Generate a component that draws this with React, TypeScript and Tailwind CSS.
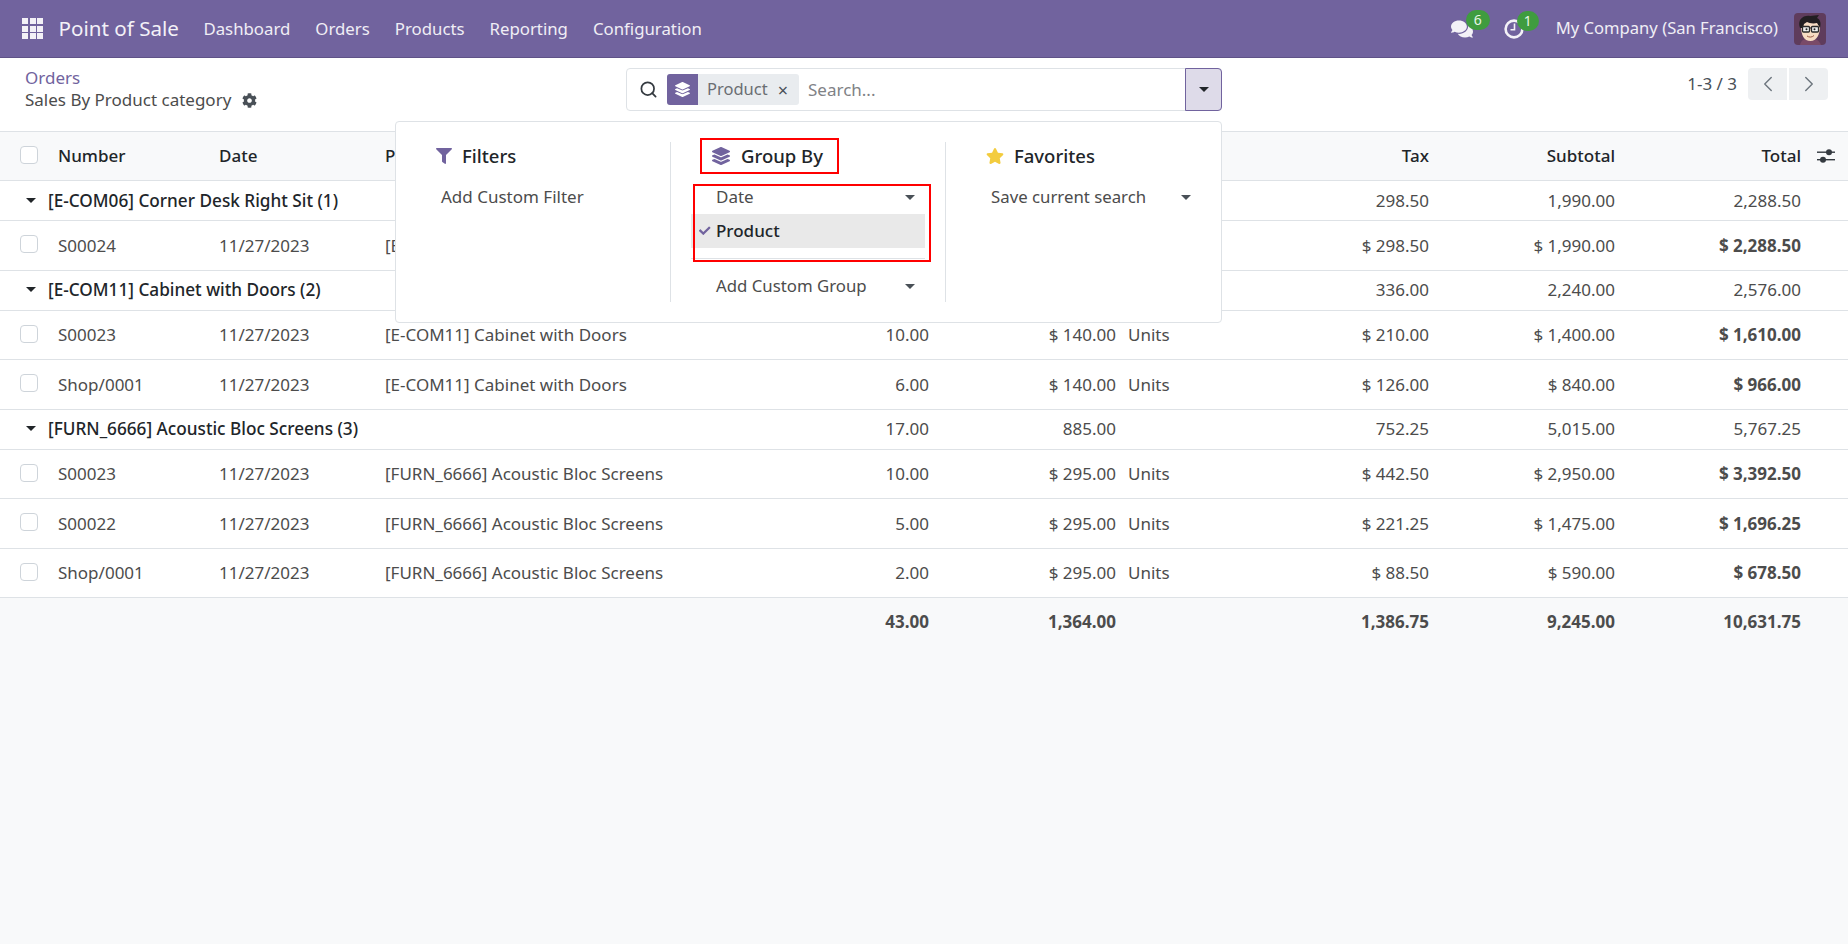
import { ChevronLeft, ChevronRight, Search } from "lucide-react";
import { FaCheck, FaCog, FaComments, FaFilter, FaLayerGroup, FaStar } from "react-icons/fa";

const navItems = ["Dashboard", "Orders", "Products", "Reporting", "Configuration"];

type Line = { num: string; product: string; qty: string; price: string; unit: string; tax: string; sub: string; total: string };
type Group = { name: string; qty: string; price: string; tax: string; sub: string; total: string; lines: Line[] };

// qty / price cells of the first rows sit under the open search panel, so they stay empty
const groups: Group[] = [
	{
		name: "[E-COM06] Corner Desk Right Sit (1)",
		qty: "",
		price: "",
		tax: "298.50",
		sub: "1,990.00",
		total: "2,288.50",
		lines: [
			{ num: "S00024", product: "[E-COM06] Corner Desk Right Sit", qty: "", price: "", unit: "", tax: "$ 298.50", sub: "$ 1,990.00", total: "$ 2,288.50" },
		],
	},
	{
		name: "[E-COM11] Cabinet with Doors (2)",
		qty: "",
		price: "",
		tax: "336.00",
		sub: "2,240.00",
		total: "2,576.00",
		lines: [
			{ num: "S00023", product: "[E-COM11] Cabinet with Doors", qty: "10.00", price: "$ 140.00", unit: "Units", tax: "$ 210.00", sub: "$ 1,400.00", total: "$ 1,610.00" },
			{ num: "Shop/0001", product: "[E-COM11] Cabinet with Doors", qty: "6.00", price: "$ 140.00", unit: "Units", tax: "$ 126.00", sub: "$ 840.00", total: "$ 966.00" },
		],
	},
	{
		name: "[FURN_6666] Acoustic Bloc Screens (3)",
		qty: "17.00",
		price: "885.00",
		tax: "752.25",
		sub: "5,015.00",
		total: "5,767.25",
		lines: [
			{ num: "S00023", product: "[FURN_6666] Acoustic Bloc Screens", qty: "10.00", price: "$ 295.00", unit: "Units", tax: "$ 442.50", sub: "$ 2,950.00", total: "$ 3,392.50" },
			{ num: "S00022", product: "[FURN_6666] Acoustic Bloc Screens", qty: "5.00", price: "$ 295.00", unit: "Units", tax: "$ 221.25", sub: "$ 1,475.00", total: "$ 1,696.25" },
			{ num: "Shop/0001", product: "[FURN_6666] Acoustic Bloc Screens", qty: "2.00", price: "$ 295.00", unit: "Units", tax: "$ 88.50", sub: "$ 590.00", total: "$ 678.50" },
		],
	},
];

function Caret({ dark }: { dark?: boolean }) {
	return (
		<span
			className={`inline-block h-0 w-0 border-x-[5px] border-t-[5px] border-x-transparent ${dark ? "border-t-[#212529]" : "border-t-[#495057]"}`}
		/>
	);
}

function Checkbox() {
	return <span className="mb-[2px] block h-[18px] w-[18px] rounded-[4px] border border-[#ced4da] bg-white" />;
}

function Avatar() {
	return (
		<svg viewBox="0 0 32 32" className="h-8 w-8 rounded-[4px]">
			<rect width="32" height="32" fill="#5f3c5c" />
			<path d="M6 32c1-5 5-7 10-7s9 2 11 7z" fill="#7a4a68" />
			<path d="M7 13c0 9 3 15 9.5 15S26 21 26 13l-2-4H10z" fill="#f7dcc3" />
			<path d="M6 15C3 7 9 2 16 3l9-1-2 3c4 2 4 6 3 10l-3-5c-4 1-8 0-10-1l-3 2-1 4z" fill="#221f22" />
			<rect x="8.5" y="13.5" width="7" height="5.5" rx="1" fill="#eef0ee" stroke="#2a2a2a" strokeWidth="1.3" />
			<rect x="17.5" y="13.5" width="7" height="5.5" rx="1" fill="#eef0ee" stroke="#2a2a2a" strokeWidth="1.3" />
			<path d="M15.5 15h2" stroke="#2a2a2a" strokeWidth="1" />
			<circle cx="12.5" cy="16.2" r="1" fill="#222" />
			<circle cx="20.5" cy="16.2" r="1" fill="#222" />
			<path d="M13 23c2 1.5 5 1.5 7-.5" stroke="#9a5b45" strokeWidth="1" fill="none" />
		</svg>
	);
}

function ClockIcon() {
	return (
		<svg viewBox="0 0 20 20" className="h-[20px] w-[20px]" fill="none" stroke="currentColor">
			<circle cx="10" cy="10" r="8.4" strokeWidth="2.6" />
			<path d="M10.5 4.5v6.3H6.5" strokeWidth="1.6" />
		</svg>
	);
}

function Navbar() {
	return (
		<nav className="flex h-[58px] items-center border-b border-[#5f5287] bg-[#71639e] text-[16.8px] text-white">
			<div className="ml-[22px] grid h-[21px] w-[21px] grid-cols-3 gap-[1.5px]">
				{Array.from({ length: 9 }).map((_, i) => (
					<span key={i} className="bg-[#f3f1f7]" />
				))}
			</div>
			<span className="ml-[15.5px] text-[20.6px] text-[#f3f1f7]">Point of Sale</span>
			<div className="ml-[24.5px] flex gap-[25px] text-[#f0eef5]">
				{navItems.map((item) => (
					<span key={item}>{item}</span>
				))}
			</div>
			<div className="ml-auto flex items-center">
				<span className="relative mr-[31px] text-[22px] text-[#f3f1f7]">
					<FaComments />
					<span className="absolute -top-[8px] left-[15px] flex h-[20px] w-[24px] items-center justify-center rounded-full bg-[#3f9c3f] text-[14px] leading-none text-[#e8f5e8]">
						6
					</span>
				</span>
				<span className="relative mr-[32px] text-[#f3f1f7]">
					<ClockIcon />
					<span className="absolute -top-[8px] left-[13px] flex h-[20px] w-[22px] items-center justify-center rounded-full bg-[#3f9c3f] text-[14px] leading-none text-[#e8f5e8]">
						1
					</span>
				</span>
				<span className="mr-[16px] text-[16.6px] text-[#f0eef5]">My Company (San Francisco)</span>
				<span className="mr-[22px]">
					<Avatar />
				</span>
			</div>
		</nav>
	);
}

function SearchPanel() {
	return (
		<div className="absolute top-[63px] left-[395px] z-10 flex h-[202px] w-[827px] rounded-[4px] border border-[#dee2e6] bg-white py-[20px] text-[#4c4c4c]">
			<div className="w-[275px] border-r border-[#dee2e6]">
				<div className="-mt-[4px] flex h-[36px] items-center pl-[40px] text-[18.5px] font-medium text-[#212529]">
					<FaFilter className="mr-[10px] text-[16px] text-[#71639e]" />
					Filters
				</div>
				<div className="mt-[6px] flex h-[34px] items-center pl-[45px]">Add Custom Filter</div>
			</div>
			<div className="relative w-[275px] border-r border-[#dee2e6]">
				<div className="-mt-[4px] ml-[29px] flex h-[36px] w-[139px] items-center border-2 border-[#f00] pl-[10px] text-[18.5px] font-medium text-[#212529]">
					<FaLayerGroup className="mr-[11px] text-[18px] text-[#71639e]" />
					Group By
				</div>
				<div className="mt-[6px] flex h-[34px] items-center justify-between pr-[30px] pl-[45px]">
					Date
					<Caret />
				</div>
				<div className="ml-[20px] flex h-[34px] w-[234px] items-center bg-[#e9e9e9] pl-[25px] font-medium text-[#212529]">
					<FaCheck className="absolute left-[28px] text-[11.5px] text-[#71639e]" />
					Product
				</div>
				<div className="mt-[10px] ml-[20px] w-[234px] border-t border-[#dee2e6]" />
				<div className="mt-[10px] flex h-[34px] items-center justify-between pr-[30px] pl-[45px] text-[16.8px]">
					Add Custom Group
					<Caret />
				</div>
				<div className="absolute top-[42px] left-[22px] h-[78px] w-[238px] border-2 border-[#f00]" />
			</div>
			<div className="flex-1">
				<div className="-mt-[4px] flex h-[36px] items-center pl-[40px] text-[18.5px] font-medium text-[#212529]">
					<FaStar className="mr-[10px] text-[18px] text-[#f3cc3e]" />
					Favorites
				</div>
				<div className="mt-[6px] flex h-[34px] items-center justify-between pr-[30px] pl-[45px] text-[16.8px]">
					Save current search
					<Caret />
				</div>
			</div>
		</div>
	);
}

function ControlPanel() {
	return (
		<div className="relative flex h-[73px] bg-white">
			<div className="absolute top-[9px] left-[25px] leading-[22px]">
				<div className="text-[#71639e]">Orders</div>
				<div className="flex items-center text-[#4c4c4c]">
					Sales By Product category
					<FaCog className="ml-[11px] text-[15px] text-[#495057]" />
				</div>
			</div>
			<div className="absolute top-[10px] left-[626px] flex h-[43px] w-[596px] items-center rounded-[4px] border border-[#dee2e6] bg-white">
				<Search className="ml-[12px] h-[19px] w-[19px] text-[#343a40]" strokeWidth={2.2} />
				<div className="ml-[9px] flex h-[31px] w-[132px] items-center rounded-[3px] bg-[#e9ecef] text-[#6b6e73]">
					<span className="flex h-full w-[31px] items-center justify-center rounded-l-[3px] bg-[#71639e]">
						<FaLayerGroup className="text-[15px] text-white" />
					</span>
					<span className="ml-[9px] text-[16.5px]">Product</span>
					<span className="ml-[10px] text-[18px] leading-none text-[#495057]">×</span>
				</div>
				<span className="ml-[9px] text-[#7f8286]">Search...</span>
				<span className="-my-px -mr-px ml-auto flex h-[43px] w-[37px] items-center justify-center rounded-r-[4px] border border-[#71639e] bg-[#dedbe9]">
					<Caret dark />
				</span>
			</div>
			<div className="mt-[10px] ml-auto flex h-[32px] items-center pr-[20px]">
				<span className="mr-[11px] text-[#495057]">1-3 / 3</span>
				<span className="flex h-[32px] w-[39px] items-center justify-center rounded-l-[4px] bg-[#eef0f2] text-[#6c757d]">
					<ChevronLeft className="h-[26px] w-[26px]" strokeWidth={1.3} />
				</span>
				<span className="ml-[2px] flex h-[32px] w-[39px] items-center justify-center rounded-r-[4px] bg-[#eef0f2] text-[#6c757d]">
					<ChevronRight className="h-[26px] w-[26px]" strokeWidth={1.3} />
				</span>
			</div>
			<SearchPanel />
		</div>
	);
}

function SlidersIcon() {
	return (
		<svg viewBox="0 0 18 16" className="ml-[7px] h-[16px] w-[18px] text-[#343a40]" fill="currentColor">
			<rect x="0" y="3.5" width="18" height="1.4" />
			<rect x="0" y="11" width="18" height="1.4" />
			<circle cx="12" cy="4.2" r="3" />
			<circle cx="6" cy="11.7" r="3" />
		</svg>
	);
}

function OrderTable() {
	const cellR = "pr-[9px] text-right";
	return (
		<table className="w-full table-fixed border-collapse text-[#4c4c4c]">
			<colgroup>
				<col className="w-[49px]" />
				<col className="w-[161px]" />
				<col className="w-[166px]" />
				<col className="w-[324px]" />
				<col className="w-[238px]" />
				<col className="w-[184px]" />
				<col className="w-[178px]" />
				<col className="w-[138px]" />
				<col className="w-[186px]" />
				<col className="w-[186px]" />
				<col className="w-[38px]" />
			</colgroup>
			<thead>
				<tr className="h-[49px] border-y border-[#dee2e6] bg-[#f8f9fa] text-[#212529]">
					<th className="pl-[20px]">
						<Checkbox />
					</th>
					<th className="pl-[9px] text-left font-medium">Number</th>
					<th className="pl-[9px] text-left font-medium">Date</th>
					<th className="pl-[9px] text-left font-medium">Product</th>
					<th />
					<th />
					<th />
					<th className={`${cellR} font-medium`}>Tax</th>
					<th className={`${cellR} font-medium`}>Subtotal</th>
					<th className={`${cellR} font-medium`}>Total</th>
					<th>
						<SlidersIcon />
					</th>
				</tr>
			</thead>
			<tbody>
				{groups.map((g) => (
					<GroupRows key={g.name} group={g} />
				))}
			</tbody>
			<tfoot>
				<tr className="h-[48px] border-t border-[#dee2e6] bg-[#f8f9fa] font-bold text-[#4c4c4c]">
					<td colSpan={4} />
					<td className={cellR}>43.00</td>
					<td className="pr-[6px] text-right">1,364.00</td>
					<td />
					<td className={cellR}>1,386.75</td>
					<td className={cellR}>9,245.00</td>
					<td className={cellR}>10,631.75</td>
					<td />
				</tr>
			</tfoot>
		</table>
	);
}

function GroupRows({ group }: { group: Group }) {
	const cellR = "pr-[9px] text-right";
	return (
		<>
			<tr className="h-[40px] border-b border-[#dee2e6] bg-white">
				<td colSpan={4} className="pl-[26px] text-[17.2px] font-medium text-[#212529]">
					<span className="flex items-center">
						<span className="mr-[12px] flex">
							<Caret dark />
						</span>
						{group.name}
					</span>
				</td>
				<td className={cellR}>{group.qty}</td>
				<td className="pr-[6px] text-right">{group.price}</td>
				<td />
				<td className={cellR}>{group.tax}</td>
				<td className={cellR}>{group.sub}</td>
				<td className={cellR}>{group.total}</td>
				<td />
			</tr>
			{group.lines.map((l) => (
				<tr key={l.num + l.product} className="h-[49.5px] border-b border-[#dee2e6] bg-white">
					<td className="pl-[20px]">
						<Checkbox />
					</td>
					<td className="pl-[9px]">{l.num}</td>
					<td className="pl-[9px]">11/27/2023</td>
					<td className="pl-[9px]">{l.product}</td>
					<td className={cellR}>{l.qty}</td>
					<td className="pr-[6px] text-right">{l.price}</td>
					<td className="pl-[6px]">{l.unit}</td>
					<td className={cellR}>{l.tax}</td>
					<td className={cellR}>{l.sub}</td>
					<td className={`${cellR} font-bold`}>{l.total}</td>
					<td />
				</tr>
			))}
		</>
	);
}

export default function App() {
	return (
		<div className="min-h-[944px] bg-[#f8f9fa] font-['Noto_Sans',sans-serif] text-[17px]">
			<Navbar />
			<ControlPanel />
			<OrderTable />
		</div>
	);
}
